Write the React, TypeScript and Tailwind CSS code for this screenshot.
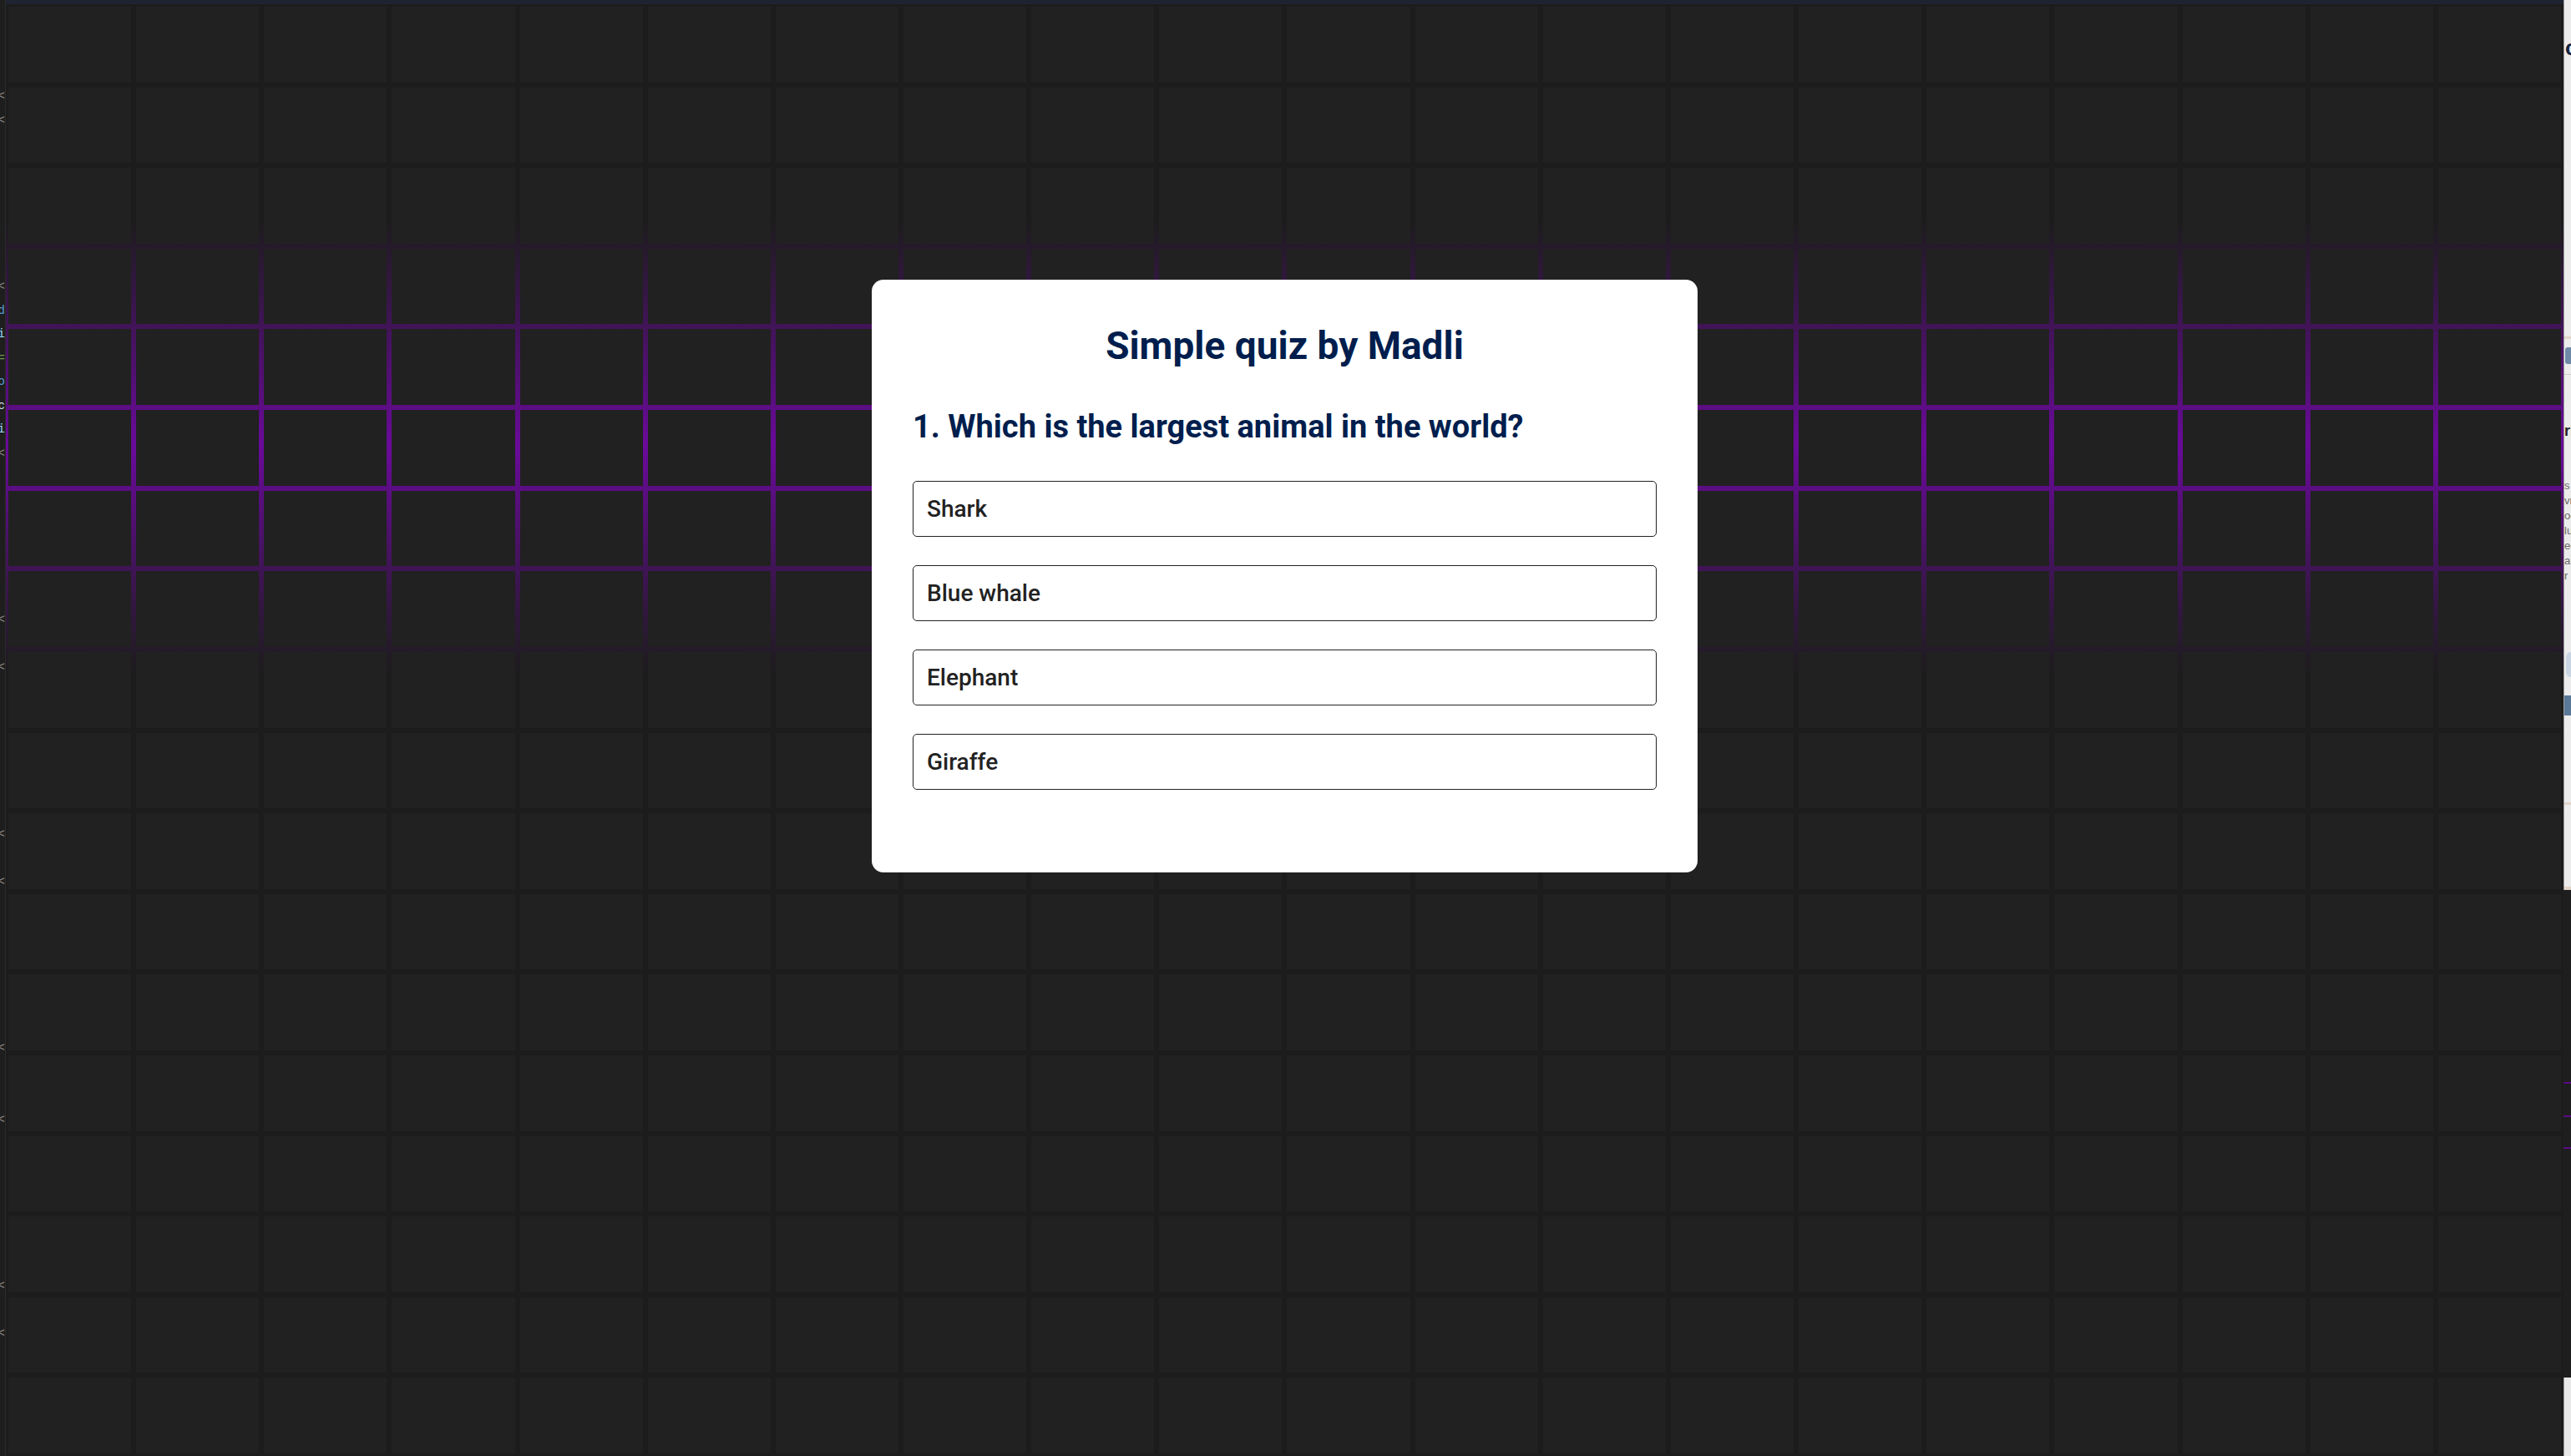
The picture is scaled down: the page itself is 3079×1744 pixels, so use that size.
import React from 'react';

const COLS = 20;
const ROWS = 18;

const options = ['Shark', 'Blue whale', 'Elephant', 'Giraffe'];

// glyph tails of the editor sitting behind the browser, one per code line
const gutterMarks: Record<number, { ch: string; cls: string }> = {
  0: { ch: '<', cls: 'text-[#8a8a8a]' },
  1: { ch: '<', cls: 'text-[#8a8a8a]' },
  8: { ch: '<', cls: 'text-[#8a8a8a]' },
  9: { ch: 'd', cls: 'text-[#569cd6]' },
  10: { ch: 'i', cls: 'text-[#9cdcfe]' },
  11: { ch: '=', cls: 'text-[#6a9955]' },
  12: { ch: 'o', cls: 'text-[#569cd6]' },
  13: { ch: 'c', cls: 'text-[#c8e4fa]' },
  14: { ch: 'i', cls: 'text-[#9cdcfe]' },
  15: { ch: '<', cls: 'text-[#8a8a8a]' },
  22: { ch: '<', cls: 'text-[#8a8a8a]' },
  24: { ch: '<', cls: 'text-[#8a8a8a]' },
  31: { ch: '<', cls: 'text-[#8a8a8a]' },
  33: { ch: '<', cls: 'text-[#8a8a8a]' },
  40: { ch: '<', cls: 'text-[#8a8a8a]' },
  43: { ch: '<', cls: 'text-[#8a8a8a]' },
  50: { ch: '<', cls: 'text-[#8a8a8a]' },
  52: { ch: '<', cls: 'text-[#8a8a8a]' },
};

const LeftGutter: React.FC = () => (
  <div className="flex w-[7px] shrink-0 flex-col overflow-hidden border-r border-[#2a2a2a] bg-[#1e1e1e] pt-[101px] font-['Liberation_Mono',monospace] text-[14px]">
    {Array.from({ length: 57 }, (_, i) => {
      const mark = gutterMarks[i];
      return (
        <div key={i} className="flex h-[28.5px] items-center justify-end leading-none whitespace-nowrap">
          {mark && <span className={mark.cls}>{mark.ch}</span>}
        </div>
      );
    })}
  </div>
);

const RightEdge: React.FC = () => (
  <div className="flex w-[9px] shrink-0 flex-col overflow-hidden font-['Liberation_Sans',sans-serif]">
    <div className="flex h-[1066px] flex-col border-l border-[#9e9e9e] bg-[#ececec]">
      <div className="h-[40px]" />
      <div className="h-[34px] pl-[1px] text-[26px] leading-[34px] font-bold whitespace-nowrap text-[#14213d]">c</div>
      <div className="h-[329px]" />
      <div className="h-[3px] bg-[#e2d5c8]" />
      <div className="h-[10px]" />
      <div className="ml-[1px] h-[20px] rounded-l-[3px] bg-[#6f89a8]" />
      <div className="h-[12px]" />
      <div className="h-[1px] bg-[#cfcfcf]" />
      <div className="h-[56px]" />
      <div className="h-[22px] text-[18px] leading-[22px] font-bold whitespace-nowrap text-[#222]">rk</div>
      <div className="h-[46px]" />
      {['s', 'vr', 'oc', 'lu', 'ec', 'ail', 'r'].map((t) => (
        <div key={t} className="h-[18px] text-[13px] leading-[18px] whitespace-nowrap text-[#666]">
          {t}
        </div>
      ))}
      <div className="h-[82px]" />
      <div className="ml-[2px] h-[30px] rounded-l-full bg-[#c9d5e3]" />
      <div className="h-[22px]" />
      <div className="h-[24px] bg-[#5a7999]" />
      <div className="h-[104px]" />
      <div className="h-[3px] bg-[#e2d5c8]" />
      <div className="flex-1" />
      <div className="h-[4px] bg-[#e2d5c8]" />
    </div>
    <div className="flex flex-1 flex-col bg-[#1e1e1e]">
      <div className="h-[230px]" />
      <div className="h-[2px] bg-[#5b0a85]" />
      <div className="h-[38px]" />
      <div className="h-[2px] bg-[#5b0a85]" />
      <div className="h-[36px]" />
      <div className="h-[2px] bg-[#5b0a85]" />
      <div className="flex-1" />
      <div className="h-[94px] border-l border-[#9e9e9e] bg-[#e9e9e9]" />
    </div>
  </div>
);

const QuizCard: React.FC = () => (
  <div className="w-[989px] rounded-[14px] bg-white px-[49px] pt-[51px] pb-[99px] font-['Roboto',sans-serif]">
    <h1 className="text-center text-[46px] leading-[56px] font-bold text-[#001e4d]">Simple quiz by Madli</h1>
    <h2 className="mt-[46px] text-[38px] leading-[46px] font-bold text-[#001e4d]">
      1. Which is the largest animal in the world?
    </h2>
    <div className="mt-[42px] flex flex-col gap-[34px]">
      {options.map((opt) => (
        <button
          key={opt}
          type="button"
          className="flex h-[67px] w-full items-center rounded-[5px] border border-[#222] bg-white pl-[16px] text-left text-[28px] font-medium text-[#222]"
        >
          {opt}
        </button>
      ))}
    </div>
  </div>
);

export default function App() {
  return (
    <div className="flex h-[1744px] w-[3079px] overflow-hidden bg-[#1c1c1c]">
      <LeftGutter />
      <div className="flex min-w-0 flex-1 flex-col">
        <div className="h-[5px] bg-[#1f2331]" />
        <div className="grid flex-1">
          <div className="col-start-1 row-start-1 grid grid-cols-[repeat(20,minmax(0,1fr))] grid-rows-[repeat(18,minmax(0,1fr))] gap-[6px] bg-[linear-gradient(to_bottom,#1c1c1c_258px,#6a0a9a_530px,#1c1c1c_802px)] p-[3px]">
            {Array.from({ length: COLS * ROWS }, (_, i) => (
              <div key={i} className="bg-[#212121]" />
            ))}
          </div>
          <div className="col-start-1 row-start-1 flex items-start justify-center pt-[330px]">
            <QuizCard />
          </div>
        </div>
      </div>
      <RightEdge />
    </div>
  );
}
